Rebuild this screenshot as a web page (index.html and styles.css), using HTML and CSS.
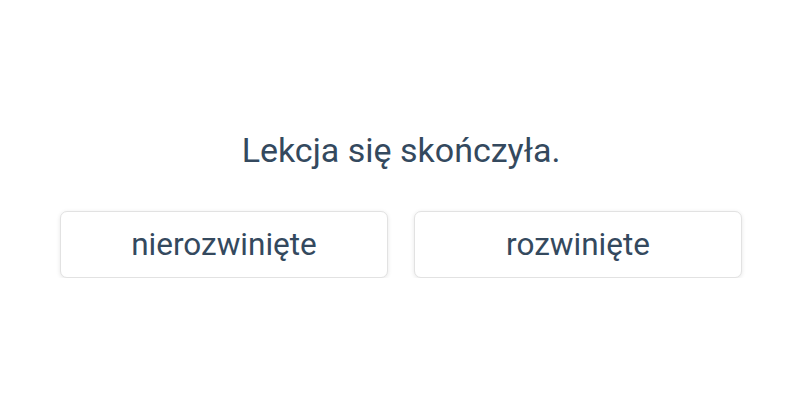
FILE: index.html
```html
<!DOCTYPE html>
<html lang="pl">
<head>
  <meta charset="UTF-8">
  <meta name="viewport" content="width=device-width, initial-scale=1.0">
  <title>Lekcja</title>
  <link rel="stylesheet" href="styles.css">
</head>
<body>
  <div class="lesson-end">
    <p class="message">Lekcja się skończyła.</p>
    <div class="choices">
      <button class="choice">nierozwinięte</button>
      <button class="choice">rozwinięte</button>
    </div>
  </div>
</body>
</html>
```

FILE: styles.css
```css
/* Page */
body {
  font-family: Roboto, "Liberation Sans", sans-serif;
  background-color: #fff;
  color: #34495e;
  margin: 0;
  padding: 0;
}

.lesson-end {
  width: 682px;
  margin: 0 auto;
  padding-top: 128px;
  transform: translateX(1px);
}

.message {
  margin: 0 0 39px;
  font-size: 34px;
  line-height: 44px;
  text-align: center;
}

/* Answer buttons */
.choices {
  display: flex;
  gap: 26px;
}

.choice {
  flex: 1;
  height: 67px;
  font-family: inherit;
  font-size: 31.5px;
  color: #34495e;
  background-color: #fff;
  border: 1px solid #e2e2e2;
  border-radius: 7px;
  box-shadow: 0 1px 4px rgba(0, 0, 0, 0.1);
  cursor: pointer;
}
```
